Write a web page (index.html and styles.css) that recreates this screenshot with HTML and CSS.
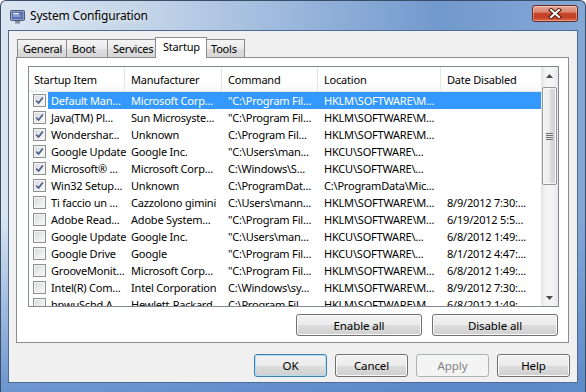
FILE: index.html
```html
<!DOCTYPE html>
<html lang="en">
<head>
    <meta charset="UTF-8">
    <title>System Configuration</title>
    <link rel="stylesheet" href="styles.css">
</head>
<body>
    <div class="window">
        <div class="titlebar">
            <svg class="app-icon" width="15" height="14" viewBox="0 0 15 14">
                <rect x="0.5" y="0.5" width="14" height="10" rx="1" fill="#8fa0bd" stroke="#4a5a78"/>
                <rect x="2" y="2" width="11" height="7" fill="#5b6fb8"/>
                <rect x="3" y="3" width="6" height="1.5" fill="#e8ecf8"/>
                <rect x="3" y="5.5" width="8" height="1" fill="#b9c4ea"/>
                <rect x="5" y="11" width="5" height="2.5" fill="#7e8aa0"/>
            </svg>
            <span class="title">System Configuration</span>
            <div class="close-btn">
                <svg width="14" height="11" viewBox="0 0 14 11">
                    <path d="M3 2 L11 9 M11 2 L3 9" stroke="#4b1a10" stroke-width="4" stroke-linecap="square"/>
                    <path d="M3 2 L11 9 M11 2 L3 9" stroke="#fff" stroke-width="2" stroke-linecap="square"/>
                </svg>
            </div>
        </div>

        <div class="client">
            <div class="tabs">
                <div class="tab w-general">General</div>
                <div class="tab w-boot">Boot</div>
                <div class="tab w-services">Services</div>
                <div class="tab active w-startup">Startup</div>
                <div class="tab w-tools">Tools</div>
            </div>

            <div class="panel">
                <div class="listview">
                    <div class="list-main">
                        <div class="list-header">
                            <div class="hcell first">Startup Item</div>
                            <div class="hcell">Manufacturer</div>
                            <div class="hcell">Command</div>
                            <div class="hcell">Location</div>
                            <div class="hcell">Date Disabled</div>
                        </div>
                        <div class="list-rows" id="rows"></div>
                    </div>
                    <div class="vscroll">
                        <div class="sb-arrow">
                            <svg width="7" height="4" viewBox="0 0 7 4"><path d="M0 4 L3.5 0 L7 4 Z" fill="#4d4d4d"/></svg>
                        </div>
                        <div class="sb-track">
                            <div class="sb-thumb">
                                <div class="grip"></div>
                            </div>
                        </div>
                        <div class="sb-arrow">
                            <svg width="7" height="4" viewBox="0 0 7 4"><path d="M0 0 L7 0 L3.5 4 Z" fill="#4d4d4d"/></svg>
                        </div>
                    </div>
                </div>
                <div class="panel-buttons">
                    <button class="btn wide">Enable all</button>
                    <button class="btn wide">Disable all</button>
                </div>
            </div>

            <div class="dialog-buttons">
                <button class="btn default">OK</button>
                <button class="btn">Cancel</button>
                <button class="btn disabled">Apply</button>
                <button class="btn">Help</button>
            </div>
        </div>
    </div>

    <script>
        const items = [
            [true, 'Default Man...', 'Microsoft Corp...', '"C:\\Program Fil...', 'HKLM\\SOFTWARE\\M...', ''],
            [true, 'Java(TM) Pl...', 'Sun Microsyste...', '"C:\\Program Fil...', 'HKLM\\SOFTWARE\\M...', ''],
            [true, 'Wondershar...', 'Unknown', 'C:\\Program Fil...', 'HKLM\\SOFTWARE\\M...', ''],
            [true, 'Google Update', 'Google Inc.', '"C:\\Users\\man...', 'HKCU\\SOFTWARE\\...', ''],
            [true, 'Microsoft\u00ae ...', 'Microsoft Corp...', 'C:\\Windows\\S...', 'HKCU\\SOFTWARE\\...', ''],
            [true, 'Win32 Setup...', 'Unknown', 'C:\\ProgramDat...', 'C:\\ProgramData\\Mic...', ''],
            [false, 'Ti faccio un ...', 'Cazzolono gimini', 'C:\\Users\\mann...', 'HKLM\\SOFTWARE\\M...', '8/9/2012 7:30:...'],
            [false, 'Adobe Read...', 'Adobe System...', '"C:\\Program Fil...', 'HKLM\\SOFTWARE\\M...', '6/19/2012 5:5...'],
            [false, 'Google Update', 'Google Inc.', '"C:\\Users\\man...', 'HKCU\\SOFTWARE\\...', '6/8/2012 1:49:...'],
            [false, 'Google Drive', 'Google', '"C:\\Program Fil...', 'HKCU\\SOFTWARE\\...', '8/1/2012 4:47:...'],
            [false, 'GrooveMonit...', 'Microsoft Corp...', '"C:\\Program Fil...', 'HKLM\\SOFTWARE\\M...', '6/8/2012 1:49:...'],
            [false, 'Intel(R) Com...', 'Intel Corporation', 'C:\\Windows\\sy...', 'HKLM\\SOFTWARE\\M...', '8/9/2012 7:30:...'],
            [false, 'hpwuSchd A...', 'Hewlett-Packard', 'C:\\Program Fil...', 'HKLM\\SOFTWARE\\M...', '6/8/2012 1:49:...']
        ];

        const check = '<svg width="9" height="9" viewBox="0 0 9 9"><path d="M1.2 4.6 L3.6 7 L7.8 1.4" fill="none" stroke="#4c5f8a" stroke-width="1.7"/></svg>';

        document.getElementById('rows').innerHTML = items.map((item, i) => `
            <div class="row">
                <span class="chk">${item[0] ? check : ''}</span>
                <div class="cells${i === 0 ? ' selected' : ''}">
                    ${item.slice(1).map(text => `<span class="cell">${text}</span>`).join('')}
                </div>
            </div>`).join('');
    </script>
</body>
</html>
```

FILE: styles.css
```css
* {
    box-sizing: border-box;
}
body {
    margin: 0;
    width: 586px;
    height: 392px;
    overflow: hidden;
    background: #fff;
    font-family: "Noto Sans", "Open Sans", sans-serif;
    font-size: 11px;
    letter-spacing: -0.2px;
    color: #000;
}
.window {
    width: 586px;
    height: 392px;
    border: 1px solid #3a4d69;
    border-bottom: none;
    border-radius: 6px 6px 0 0;
    padding: 0 7px 9px;
    display: flex;
    flex-direction: column;
    background:
        linear-gradient(to bottom, rgba(255, 255, 255, 0) 55%, rgba(86, 134, 200, 0.85) 100%),
        linear-gradient(to right, #dbe6f2 0%, #c3d4e8 25%, #9ab7dc 50%, #7299cd 75%, #84a7d6 100%);
}
.titlebar {
    height: 29px;
    display: flex;
    align-items: center;
    padding-left: 2px;
}
.app-icon {
    margin-right: 5px;
    margin-top: 2px;
}
.title {
    font-size: 12px;
    letter-spacing: -0.2px;
    color: #000;
    text-shadow: 0 0 6px rgba(255, 255, 255, 0.9);
}
.close-btn {
    margin-left: auto;
    align-self: flex-start;
    margin-top: 4px;
    width: 46px;
    height: 17px;
    border: 1px solid #6b2a1e;
    border-radius: 3px;
    display: flex;
    align-items: center;
    justify-content: center;
    background: linear-gradient(to bottom, #e8a796 0%, #d98673 40%, #c7472c 50%, #c24026 75%, #dd6a4c 100%);
    box-shadow: inset 0 0 0 1px rgba(255, 255, 255, 0.35);
}
.client {
    flex: 1;
    background: #f0f0f0;
    border: 1px solid #4d6b95;
    padding: 6px 8px 0 7px;
    display: flex;
    flex-direction: column;
}

/* tabs */
.tabs {
    display: flex;
    align-items: flex-end;
    height: 21px;
    margin-bottom: -1px;
    padding-left: 1px;
    position: relative;
    z-index: 1;
}
.tab {
    height: 18px;
    margin-bottom: 1px;
    border: 1px solid #898c95;
    border-bottom: none;
    margin-right: -1px;
    padding-left: 5px;
    line-height: 17px;
    white-space: nowrap;
    background: linear-gradient(to bottom, #f3f3f3 0%, #ebebeb 50%, #dedede 50%, #d6d6d6 100%);
}
.tab.active {
    height: 21px;
    margin: 0 -2px 0 -2px;
    padding-left: 7px;
    line-height: 18px;
    background: #fff;
    position: relative;
    z-index: 2;
}
.w-general { width: 50px; }
.w-boot { width: 42px; }
.w-services { width: 51px; }
.w-startup { width: 52px; }
.w-tools { width: 40px; }

.panel {
    height: 286px;
    background: #fff;
    border: 1px solid #898c95;
    padding: 8px 9px 0 11px;
}

/* list view */
.listview {
    height: 241px;
    border: 1px solid #828790;
    display: flex;
}
.list-main {
    width: 513px;
    overflow: hidden;
}
.list-header {
    display: grid;
    grid-template-columns: 96px 97px 96px 123px 101px;
    height: 25px;
    border-bottom: 1px solid #e5e5e5;
    background: linear-gradient(to bottom, #fff 0%, #fff 60%, #f7f8f9 100%);
}
.hcell {
    border-right: 1px solid #e5e5e5;
    padding-left: 6px;
    line-height: 25px;
    white-space: nowrap;
}
.hcell.first {
    padding-left: 5px;
}
.list-rows {
    height: 214px;
    overflow: hidden;
}
.row {
    display: flex;
    height: 17px;
    align-items: center;
}
.chk {
    flex-shrink: 0;
    width: 13px;
    height: 13px;
    margin: 0 2px 0 4px;
    border: 1px solid #8e8f8f;
    background: linear-gradient(135deg, #d6d8dc 0%, #eeeeee 60%, #f8f8f8 100%);
    box-shadow: inset 0 0 0 1px #f4f4f4;
    display: flex;
    align-items: center;
    justify-content: center;
}
.cells {
    flex-shrink: 0;
    display: grid;
    grid-template-columns: 77px 97px 96px 123px 101px;
    height: 17px;
    line-height: 17px;
}
.cells.selected {
    background: #3399ff;
    color: #fff;
}
.cell {
    padding-left: 6px;
    white-space: nowrap;
}
.cell:first-child {
    padding-left: 3px;
}

/* scrollbar */
.vscroll {
    width: 17px;
    display: flex;
    flex-direction: column;
    background: linear-gradient(to right, #e4e4e4 0%, #f4f4f4 30%, #f4f4f4 70%, #e8e8e8 100%);
}
.sb-arrow {
    height: 17px;
    display: flex;
    align-items: center;
    justify-content: center;
}
.sb-track {
    flex: 1;
    padding-top: 3px;
}
.sb-thumb {
    height: 98px;
    margin: 0 1px;
    border: 1px solid #979797;
    border-radius: 2px;
    background: linear-gradient(to right, #f3f3f3 0%, #ececec 50%, #dcdcdc 51%, #d2d2d2 100%);
    box-shadow: inset 0 0 0 1px #f8f8f8;
    display: flex;
    align-items: center;
    justify-content: center;
}
.grip {
    width: 7px;
    height: 7px;
    background: repeating-linear-gradient(to bottom, #6f6f6f 0, #6f6f6f 1px, #e8e8e8 1px, #e8e8e8 2px);
}

/* buttons */
.panel-buttons {
    display: flex;
    justify-content: flex-end;
    gap: 10px;
    margin-top: 7px;
    margin-right: 1px;
}
.btn {
    width: 73px;
    height: 23px;
    padding: 0;
    font-family: inherit;
    font-size: 11.5px;
    letter-spacing: -0.1px;
    color: #000;
    border: 1px solid #707070;
    border-radius: 3px;
    background: linear-gradient(to bottom, #f2f2f2 0%, #ebebeb 50%, #dddddd 50%, #cfcfcf 100%);
    box-shadow: inset 0 0 0 1px #fbfbfb;
}
.btn.wide {
    width: 126px;
    height: 22px;
}
.btn.default {
    border-color: #3c7fb1;
    box-shadow: inset 0 0 0 1px #b4e0f6;
}
.btn.disabled {
    color: #838383;
    border-color: #adb2b5;
    background: #f4f4f4;
    box-shadow: none;
}
.dialog-buttons {
    display: flex;
    justify-content: flex-end;
    gap: 8px;
    margin-top: 11px;
    margin-right: -1px;
}
```
